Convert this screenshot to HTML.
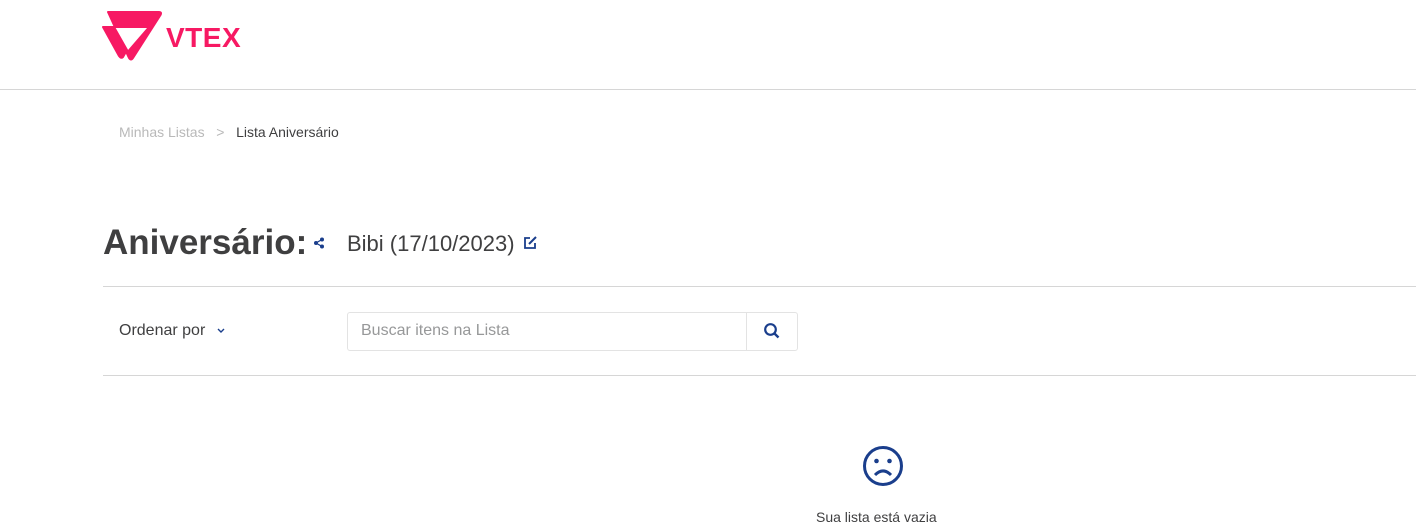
<!DOCTYPE html>
<html><head><meta charset="utf-8"><style>
body{margin:0;width:1416px;height:530px;background:#fff;font-family:"Liberation Sans",sans-serif;position:relative;overflow:hidden;color:#3f3f40}
.a{position:absolute;white-space:nowrap}
</style></head><body>
<svg class="a" style="left:0;top:0" width="170" height="70" viewBox="0 0 170 70">
<path d="M108 12 H159 Q162 12 160.5 15 L133 58 Q131 61 129 58 Z" fill="#f71963" stroke="#f71963" stroke-width="2" stroke-linejoin="round"/>
<path d="M112 28 H147 L128 50 Z" fill="#fff"/>
<path d="M103 27 H114 L127 50 L123 57 Q121 59 119 56 Z" fill="#f71963" stroke="#f71963" stroke-width="2" stroke-linejoin="round"/>
</svg>
<div class="a" style="left:166px;top:22px;font-size:28px;font-weight:bold;color:#f71963;letter-spacing:0.5px">VTEX</div>
<div class="a" style="left:0;top:89px;width:1416px;height:1px;background:#d6d6d6"></div>
<div class="a" style="left:119px;top:124px;font-size:14px;color:#b9b9b9">Minhas Listas &nbsp;&nbsp;&gt;&nbsp;&nbsp; <span style="color:#3f3f40">Lista Aniversário</span></div>
<div class="a" style="left:103px;top:223px;font-size:35px;font-weight:bold;color:#3f3f40">Aniversário:</div>
<svg class="a" style="left:313px;top:237px" width="12" height="12" viewBox="0 0 12 12"><circle cx="9" cy="2.5" r="2" fill="#1a3e8c"/><circle cx="3" cy="6" r="2" fill="#1a3e8c"/><circle cx="9" cy="9.5" r="2" fill="#1a3e8c"/><path d="M9 2.5L3 6L9 9.5" stroke="#1a3e8c" stroke-width="1.3" fill="none"/></svg>
<div class="a" style="left:347px;top:231px;font-size:22px;color:#3f3f40">Bibi (17/10/2023)</div>
<svg class="a" style="left:522px;top:235px" width="16" height="16" viewBox="0 0 16 16"><path d="M8 3H3V13H13V8" stroke="#1a3e8c" stroke-width="1.8" fill="none"/><path d="M7 9L14 2" stroke="#1a3e8c" stroke-width="2"/></svg>
<div class="a" style="left:103px;top:286px;width:1313px;height:1px;background:#d6d6d6"></div>
<div class="a" style="left:119px;top:322px;font-size:16px;color:#3f3f40">Ordenar por</div>
<svg class="a" style="left:216px;top:327px" width="10" height="8" viewBox="0 0 10 8"><path d="M2 2L5 5L8 2" stroke="#1a3e8c" stroke-width="1.4" fill="none"/></svg>
<div class="a" style="left:347px;top:312px;width:449px;height:37px;border:1px solid #e3e3e3;border-radius:3px"></div>
<div class="a" style="left:746px;top:313px;width:1px;height:37px;background:#e3e3e3"></div>
<div class="a" style="left:361px;top:322px;font-size:16px;color:#979899">Buscar itens na Lista</div>
<svg class="a" style="left:763px;top:322px" width="18" height="18" viewBox="0 0 18 18"><circle cx="7.5" cy="7.5" r="5.3" stroke="#1a3e8c" stroke-width="2.2" fill="none"/><path d="M11.5 11.5L15.5 15.5" stroke="#1a3e8c" stroke-width="2.4"/></svg>
<div class="a" style="left:103px;top:375px;width:1313px;height:1px;background:#d6d6d6"></div>
<svg class="a" style="left:862px;top:445px" width="42" height="42" viewBox="0 0 42 42"><circle cx="21" cy="21" r="18.5" stroke="#1a3e8c" stroke-width="3" fill="none"/><circle cx="14.5" cy="16" r="2.3" fill="#1a3e8c"/><circle cx="27.5" cy="16" r="2.3" fill="#1a3e8c"/><path d="M13 30Q21 22 29 30" stroke="#1a3e8c" stroke-width="3" fill="none"/></svg>
<div class="a" style="left:816px;top:509px;font-size:14px;color:#3f3f40">Sua lista está vazia</div>
</body></html>
